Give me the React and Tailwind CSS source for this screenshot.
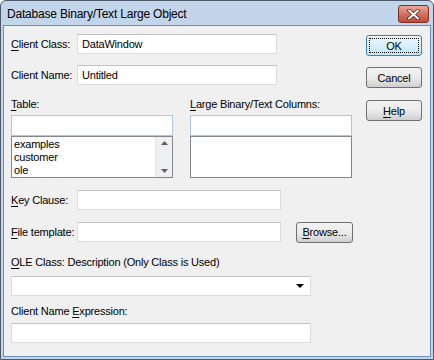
const font = { fontFamily: '"Liberation Sans", "Noto Sans", sans-serif' };

function Mn({ children }) {
  return <span className="underline underline-offset-[2px] decoration-[1px]">{children}</span>;
}

function TextBox({ className = "", children }) {
  return (
    <div
      className={`h-[20px] shrink-0 bg-white border border-[#dcdcdc] border-t-[#c2c2c2] flex items-center pl-[4px] ${className}`}
    >
      {children}
    </div>
  );
}

function Button({ children, isDefault }) {
  if (isDefault) {
    return (
      <div className="w-[56px] h-[21px] rounded-[3px] border border-[#3c7fb1] bg-gradient-to-b from-[#eaf6fd] via-[#d9f0fc] to-[#bee6fd] p-[2px]">
        <div className="w-full h-full border border-dotted border-black flex items-center justify-center">
          {children}
        </div>
      </div>
    );
  }
  return (
    <div className="w-[56px] h-[21px] rounded-[3px] border border-[#707070] bg-gradient-to-b from-[#f2f2f2] via-[#ebebeb] to-[#cfcfcf] flex items-center justify-center">
      {children}
    </div>
  );
}

export default function App() {
  return (
    <div
      style={font}
      className="w-[434px] h-[360px] bg-[#c3d5eb] border border-[#4b5868] rounded-t-[6px] flex flex-col text-[11px] tracking-[-0.2px] text-black leading-[14px]"
    >
      {/* title bar */}
      <div className="h-[24px] flex items-center pl-[6px] pr-[4px] justify-between">
        <span className="text-[12px] pt-[2px]">Database Binary/Text Large Object</span>
        <div className="w-[31px] h-[18px] mt-[2px] rounded-[3px] border border-[#7a2f27] bg-gradient-to-b from-[#e9a99b] via-[#d2715f] to-[#c0483a] flex items-center justify-center">
          <svg width="13" height="11" viewBox="0 0 13 11">
            <path d="M2 1.5 L11 9.5 M11 1.5 L2 9.5" stroke="#5a1f18" strokeWidth="3.6" strokeLinecap="round" />
            <path d="M2 1.5 L11 9.5 M11 1.5 L2 9.5" stroke="#fff" strokeWidth="2" strokeLinecap="round" />
          </svg>
        </div>
      </div>

      {/* client area */}
      <div className="flex-1 mx-[2px] mb-[2px] border border-[#6a8fbb] bg-[#f0f0f0] flex pl-[7px] pr-[8px]">
        <div className="flex-1 flex flex-col pt-[8px]">
          <div className="flex items-center h-[20px]">
            <span className="w-[66px] shrink-0 whitespace-nowrap"><Mn>C</Mn>lient Class:</span>
            <TextBox className="w-[200px]">DataWindow</TextBox>
          </div>
          <div className="flex items-center h-[20px] mt-[11px]">
            <span className="w-[66px] shrink-0 whitespace-nowrap">Client Name:</span>
            <TextBox className="w-[200px]">Untitled</TextBox>
          </div>

          <div className="flex gap-[17px] mt-[12px]">
            <div className="w-[162px] flex flex-col">
              <span><Mn>T</Mn>able:</span>
              <div className="h-[21px] mt-[4px] bg-white border border-[#a9c8e6]" />
              <div className="h-[42px] bg-white border border-[#828790] flex">
                <div className="flex-1 pl-[2px] leading-[13px] pt-[1px]">
                  <div>examples</div>
                  <div>customer</div>
                  <div>ole</div>
                </div>
                <div className="w-[17px] bg-[#f0f0f0] border-l border-[#e6e6e6] flex flex-col justify-between items-center py-[4px]">
                  <svg width="7" height="4" viewBox="0 0 7 4"><path d="M0 4 L3.5 0 L7 4 Z" fill="#606060" /></svg>
                  <svg width="7" height="4" viewBox="0 0 7 4"><path d="M0 0 L3.5 4 L7 0 Z" fill="#606060" /></svg>
                </div>
              </div>
            </div>
            <div className="w-[162px] flex flex-col">
              <span className="whitespace-nowrap"><Mn>L</Mn>arge Binary/Text Columns:</span>
              <div className="h-[21px] mt-[4px] bg-white border border-[#a9c8e6]" />
              <div className="h-[42px] bg-white border border-[#828790]" />
            </div>
          </div>

          <div className="flex items-center h-[20px] mt-[12px]">
            <span className="w-[66px] shrink-0 whitespace-nowrap"><Mn>K</Mn>ey Clause:</span>
            <TextBox className="w-[204px]" />
          </div>
          <div className="flex items-center h-[20px] mt-[12px]">
            <span className="w-[66px] shrink-0 whitespace-nowrap"><Mn>F</Mn>ile template:</span>
            <TextBox className="w-[204px]" />
            <div className="ml-[15px] shrink-0 w-[57px] h-[21px] rounded-[3px] border border-[#707070] bg-gradient-to-b from-[#f2f2f2] via-[#ebebeb] to-[#cfcfcf] flex items-center justify-center">
              <span className="whitespace-nowrap"><Mn>B</Mn>rowse...</span>
            </div>
          </div>

          <span className="mt-[13px] whitespace-nowrap"><Mn>O</Mn>LE Class: Description (Only Class is Used)</span>
          <div className="mt-[7px] w-[300px] h-[20px] bg-white border border-[#dcdcdc] border-t-[#c2c2c2] flex items-center justify-end pr-[6px]">
            <svg width="8" height="4" viewBox="0 0 8 4"><path d="M0 0 L8 0 L4 4 Z" fill="#000" /></svg>
          </div>

          <span className="mt-[8px] whitespace-nowrap">Client Name <Mn>E</Mn>xpression:</span>
          <TextBox className="mt-[5px] w-[300px]" />
        </div>

        <div className="w-[56px] flex flex-col pt-[9px] gap-[11px]">
          <Button isDefault>OK</Button>
          <Button>Cancel</Button>
          <div className="mt-[1px]">
            <Button><span><Mn>H</Mn>elp</span></Button>
          </div>
        </div>
      </div>
    </div>
  );
}
